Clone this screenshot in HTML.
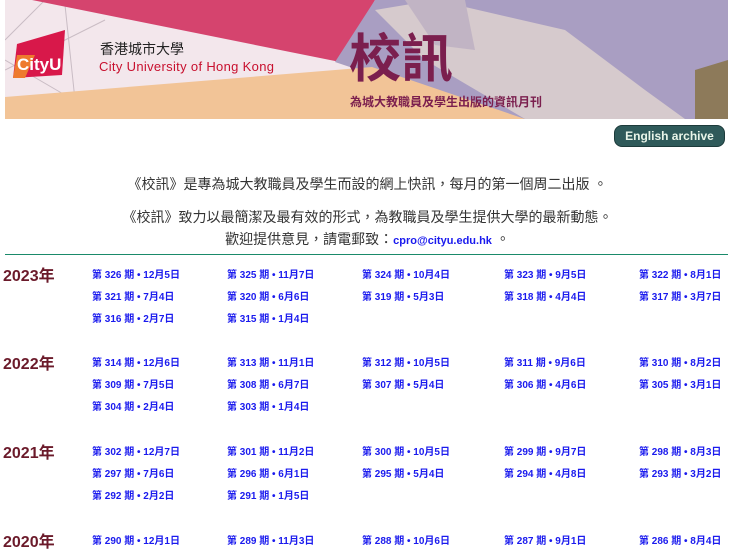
<!DOCTYPE html>
<html><head><meta charset="utf-8"><style>
body{margin:0;width:735px;height:551px;overflow:hidden;background:#fff;font-family:"Liberation Sans","Noto Sans CJK TC",sans-serif;position:relative}
.a{position:absolute}
.t{position:absolute;left:0;width:735px;text-align:center;font-size:14px;color:#333}
.y{position:absolute;left:3px;font-size:16px;font-weight:bold;color:#6b1a2a}
.l{position:absolute;font-size:10px;font-weight:bold;color:#1a1aee;white-space:nowrap}
</style></head><body>
<svg class="a" style="left:5px;top:0" width="723" height="119" viewBox="0 0 723 119">
<rect width="723" height="119" fill="#f3e7ec"/>
<g stroke="#c9bcc4" stroke-width="1" fill="none"><line x1="0" y1="40" x2="40" y2="0"/><line x1="60" y1="5" x2="70" y2="100"/><line x1="0" y1="70" x2="100" y2="20"/><line x1="0" y1="60" x2="60" y2="95"/></g>
<polygon points="27,0 370,0 335,62" fill="#d5446e"/>
<polygon points="370,0 723,0 723,119 500,119 330,62" fill="#a99ec2"/>
<polygon points="370,10 430,0 560,30 640,90 680,119 520,119 420,60" fill="#d6cacd"/>
<polygon points="400,0 460,0 470,50 430,45" fill="#c1b4c4"/>
<polygon points="690,70 723,60 723,119 690,119" fill="#8d7a5a"/>
<polygon points="0,97 367,67 520,119 0,119" fill="#f2c497"/>
<polygon points="12,44 60,30 57,75 8,78" fill="#d8184a"/>
<polygon points="12,55 30,55 20,78 8,78" fill="#ee7a2e"/>
<text x="12" y="70" font-family="Liberation Sans" font-weight="bold" font-size="17" fill="#fff">CityU</text>
<text x="95" y="54" font-family="Noto Sans CJK TC" font-size="14" fill="#222">香港城市大學</text>
<text x="94" y="71" font-family="Liberation Sans" font-size="13" fill="#c8102e" textLength="175">City University of Hong Kong</text>
<text x="344" y="77" font-family="Noto Sans CJK TC" font-weight="bold" font-size="52" fill="#7b1f4e">校訊</text>
<text x="345" y="106" font-family="Noto Sans CJK TC" font-weight="bold" font-size="12" fill="#7b1f4e">為城大教職員及學生出版的資訊月刊</text>
</svg>
<div class="a" style="left:614px;top:125px;width:109px;height:20px;background:#2f5a5a;border-radius:8px;color:#e9f5e9;font-weight:bold;font-size:12px;line-height:20px;text-align:center;border:1px solid #1d3b3b">English archive</div>
<div class="t" style="top:174px">《校訊》是專為城大教職員及學生而設的網上快訊，每月的第一個周二出版 。</div>
<div class="t" style="top:207px">《校訊》致力以最簡潔及最有效的形式，為教職員及學生提供大學的最新動態。</div>
<div class="t" style="top:229px">歡迎提供意見，請電郵致：<span style="color:#1a1aee;font-size:11px;font-weight:bold">cpro@cityu.edu.hk</span> 。</div>
<div class="a" style="left:5px;top:254px;width:723px;height:1px;background:#1a8a6a"></div>

<div class="y" style="top:262px">2023年</div>
<div class="l" style="left:92px;top:266px">第 326 期 • 12月5日</div><div class="l" style="left:227px;top:266px">第 325 期 • 11月7日</div><div class="l" style="left:362px;top:266px">第 324 期 • 10月4日</div><div class="l" style="left:504px;top:266px">第 323 期 • 9月5日</div><div class="l" style="left:639px;top:266px">第 322 期 • 8月1日</div>
<div class="l" style="left:92px;top:288px">第 321 期 • 7月4日</div><div class="l" style="left:227px;top:288px">第 320 期 • 6月6日</div><div class="l" style="left:362px;top:288px">第 319 期 • 5月3日</div><div class="l" style="left:504px;top:288px">第 318 期 • 4月4日</div><div class="l" style="left:639px;top:288px">第 317 期 • 3月7日</div>
<div class="l" style="left:92px;top:310px">第 316 期 • 2月7日</div><div class="l" style="left:227px;top:310px">第 315 期 • 1月4日</div>

<div class="y" style="top:350px">2022年</div>
<div class="l" style="left:92px;top:354px">第 314 期 • 12月6日</div><div class="l" style="left:227px;top:354px">第 313 期 • 11月1日</div><div class="l" style="left:362px;top:354px">第 312 期 • 10月5日</div><div class="l" style="left:504px;top:354px">第 311 期 • 9月6日</div><div class="l" style="left:639px;top:354px">第 310 期 • 8月2日</div>
<div class="l" style="left:92px;top:376px">第 309 期 • 7月5日</div><div class="l" style="left:227px;top:376px">第 308 期 • 6月7日</div><div class="l" style="left:362px;top:376px">第 307 期 • 5月4日</div><div class="l" style="left:504px;top:376px">第 306 期 • 4月6日</div><div class="l" style="left:639px;top:376px">第 305 期 • 3月1日</div>
<div class="l" style="left:92px;top:398px">第 304 期 • 2月4日</div><div class="l" style="left:227px;top:398px">第 303 期 • 1月4日</div>

<div class="y" style="top:439px">2021年</div>
<div class="l" style="left:92px;top:443px">第 302 期 • 12月7日</div><div class="l" style="left:227px;top:443px">第 301 期 • 11月2日</div><div class="l" style="left:362px;top:443px">第 300 期 • 10月5日</div><div class="l" style="left:504px;top:443px">第 299 期 • 9月7日</div><div class="l" style="left:639px;top:443px">第 298 期 • 8月3日</div>
<div class="l" style="left:92px;top:465px">第 297 期 • 7月6日</div><div class="l" style="left:227px;top:465px">第 296 期 • 6月1日</div><div class="l" style="left:362px;top:465px">第 295 期 • 5月4日</div><div class="l" style="left:504px;top:465px">第 294 期 • 4月8日</div><div class="l" style="left:639px;top:465px">第 293 期 • 3月2日</div>
<div class="l" style="left:92px;top:487px">第 292 期 • 2月2日</div><div class="l" style="left:227px;top:487px">第 291 期 • 1月5日</div>

<div class="y" style="top:528px">2020年</div>
<div class="l" style="left:92px;top:532px">第 290 期 • 12月1日</div><div class="l" style="left:227px;top:532px">第 289 期 • 11月3日</div><div class="l" style="left:362px;top:532px">第 288 期 • 10月6日</div><div class="l" style="left:504px;top:532px">第 287 期 • 9月1日</div><div class="l" style="left:639px;top:532px">第 286 期 • 8月4日</div>
</body></html>
